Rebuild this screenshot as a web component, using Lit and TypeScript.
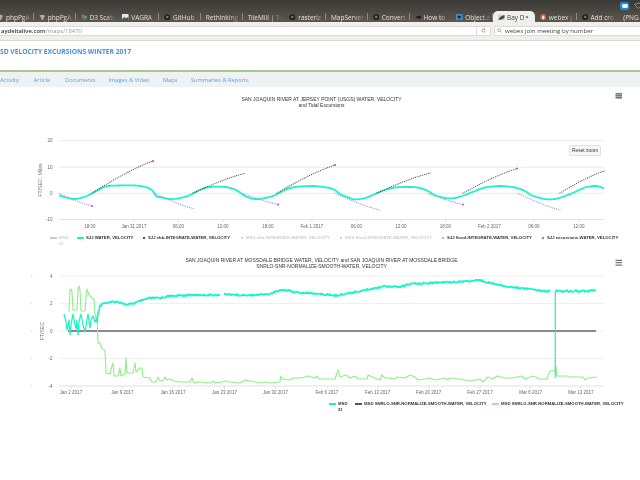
import { LitElement, html, svg, css } from "lit";
import { customElement } from "lit/decorators.js";

type P = [number, number];
const pts = (a: P[]) => a.map((p) => p.join(",")).join(" ");
const rnd = (i: number) => {
  const x = Math.sin(i * 12.9898) * 43758.5453;
  return x - Math.floor(x);
};

function smooth(a: P[], step = 1.5): P[] {
  const out: P[] = [];
  for (let i = 0; i < a.length - 1; i++) {
    const p0 = a[Math.max(i - 1, 0)], p1 = a[i], p2 = a[i + 1], p3 = a[Math.min(i + 2, a.length - 1)];
    const n = Math.max(1, Math.ceil((p2[0] - p1[0]) / step));
    for (let k = 0; k < n; k++) {
      const t = k / n, t2 = t * t, t3 = t2 * t;
      const f = (q: number) => 0.5 * (2 * p1[q] + (p2[q] - p0[q]) * t + (2 * p0[q] - 5 * p1[q] + 4 * p2[q] - p3[q]) * t2 + (3 * p1[q] - p0[q] - 3 * p2[q] + p3[q]) * t3);
      out.push([+f(0).toFixed(2), +f(1).toFixed(2)]);
    }
  }
  out.push(a[a.length - 1]);
  return out;
}

function densifyNoisy(a: P[], amp: number, seed: number): P[] {
  const out: P[] = [];
  let c = seed;
  for (let i = 0; i < a.length - 1; i++) {
    const n = Math.max(1, Math.round((a[i + 1][0] - a[i][0]) / 0.8));
    for (let k = 0; k < n; k++) {
      const t = k / n;
      out.push([+(a[i][0] + (a[i + 1][0] - a[i][0]) * t).toFixed(2), +(a[i][1] + (a[i + 1][1] - a[i][1]) * t + (rnd(c++) - 0.5) * amp).toFixed(2)]);
    }
  }
  out.push(a[a.length - 1]);
  return out;
}

function arc(x0: number, y0: number, x1: number, y1: number, w: number): P[] {
  const out: P[] = [];
  const n = Math.round((x1 - x0) / 1.8);
  for (let i = 0; i <= n; i++) {
    const t = i / n;
    const e = Math.sin((t * Math.PI) / 2);
    const m = t * (1 - w) + e * w;
    out.push([x0 + (x1 - x0) * t, y0 + (y1 - y0) * m]);
  }
  return out;
}

const tide: P[] = [[59, 195.5], [66, 197.5], [75, 199], [84, 197], [92, 193.5], [100, 189], [108, 186], [120, 185.5], [135, 185.5], [145, 187], [152, 190], [156, 196], [160, 197], [170, 199], [180, 198], [190, 195], [200, 190], [210, 187], [225, 187], [236, 190], [245, 196], [255, 199], [265, 198], [275, 195], [285, 190], [295, 187], [310, 186], [320, 186.5], [333, 189], [340, 194], [350, 198], [355, 199.5], [365, 198], [375, 194], [385, 190], [395, 187.5], [410, 187], [420, 188], [428, 191], [435, 195], [445, 198], [455, 198], [465, 195], [475, 191], [485, 187.5], [500, 186], [515, 187.5], [525, 191], [532, 195.5], [545, 199], [555, 199], [565, 196], [575, 192], [585, 187.5], [596, 186], [604, 188.5]];
const ebb = [[92, 193, 153, 161], [193, 193, 244, 173.5], [277, 193, 335, 165], [377, 193, 430, 173], [463, 193, 517, 168.5], [560, 193, 604, 171]];
const flood = [[59, 193.5, 92, 206], [155, 193.5, 193, 208.5], [243, 193.5, 278, 204.5], [335, 193.5, 380, 210], [428, 193.5, 463, 204.5], [518, 193.5, 560, 210]];
const reds: P[] = [[92, 206], [153, 161], [278, 204.5], [335, 165], [463, 204.5], [517, 168.5]];

const tealA: P[] = [[64, 314], [66, 322], [67, 330], [68, 325], [69, 320], [70, 335], [71, 325], [73, 314], [75, 325], [76, 329], [77, 320], [78, 335], [79, 322], [81, 314], [83, 325], [85, 332], [87, 320], [88, 314], [90, 328], [91, 320], [93, 316], [95, 322], [96, 320], [97, 322], [98, 313], [100, 306], [103, 303], [107, 303], [112, 302], [120, 302], [127, 305], [130, 304], [135, 303], [140, 301], [150, 298], [160, 298], [170, 296], [190, 295], [200, 295], [220, 295]];
const tealB: P[] = [[224, 294], [240, 295], [250, 295], [270, 294], [280, 290], [285, 290], [300, 293], [310, 293], [320, 294], [335, 295.5], [345, 294], [360, 291], [375, 288], [385, 286], [400, 287], [410, 284], [430, 283], [450, 282], [470, 281], [482, 280.5], [490, 283], [510, 287], [530, 289], [545, 291], [550, 291]];
const tealC: P[] = [[555.3, 378], [555.3, 291], [570, 291], [585, 291], [596, 290]];
const green: P[] = [[68, 311], [69, 311], [70, 290], [71, 289], [72, 292], [73, 310], [75, 310], [77, 310], [78, 290], [79, 286], [80, 290], [81, 311], [85, 311], [86, 298], [87, 289], [89, 295], [92, 298], [94, 299], [95, 313], [96, 320], [97, 316], [98, 343], [100, 343], [102, 349], [105, 350], [106, 373], [110, 374], [112, 366], [113, 363], [114, 376], [118, 376], [120, 368], [121, 376], [125, 374], [126, 358], [127, 373], [133, 373], [135, 363], [136, 372], [140, 368], [142, 368], [143, 377], [150, 378], [152, 382], [156, 382], [158, 377], [160, 381], [164, 380], [165, 377], [167, 380], [170, 379], [174, 381], [180, 382], [190, 382], [192, 378], [194, 383], [198, 382], [200, 382], [210, 383], [214, 381], [215, 383], [222, 382], [225, 381], [230, 382], [240, 383], [245, 380], [250, 381], [255, 382], [260, 383], [265, 382], [270, 383], [280, 382], [280.5, 376], [282, 379], [290, 380], [293, 378], [300, 378], [305, 377], [308, 376], [315, 378], [317, 376], [319, 379], [325, 379], [335, 379], [338, 370], [340, 377], [346, 375], [350, 378], [355, 376], [358, 379], [367, 379], [368, 375], [375, 378], [380, 380], [381.7, 375], [385, 378], [390, 378], [395, 379], [397, 377], [405, 378], [410, 375], [415, 377], [418, 380], [425, 379], [430, 378], [435, 380], [445, 378], [448, 380], [450, 378], [460, 379], [470, 381], [475, 380], [480, 379], [483, 382], [488, 377], [493, 379], [497, 376], [505, 378], [513, 378], [521.7, 376], [525, 379], [533, 376], [540, 379], [546.7, 379], [550, 371], [555, 371], [556, 366], [556.7, 376], [566.7, 376], [570, 377], [583, 377], [585, 380], [588, 378], [596.7, 377]];

const ticks1: [number, string][] = [[90, "18:00"], [134, "Jan 31 2017"], [178.5, "06:00"], [223, "12:00"], [268, "18:00"], [312, "Feb 1 2017"], [356.5, "06:00"], [401, "12:00"], [445.5, "18:00"], [489.5, "Feb 2 2017"], [534, "06:00"], [579, "12:00"]];
const ticks2: [number, string][] = [[71, "Jan 2 2017"], [122.3, "Jan 9 2017"], [173, "Jan 16 2017"], [224.5, "Jan 23 2017"], [275.5, "Jan 30 2017"], [327, "Feb 6 2017"], [377.7, "Feb 13 2017"], [428.7, "Feb 20 2017"], [480, "Feb 27 2017"], [530.6, "Mar 6 2017"], [581, "Mar 13 2017"]];

const tabs = [
  ["php", "phpPgA"], ["php", "phpPgA"], ["d3", "D3 Scatt"], ["img", "VAGRA"], ["gh", "GitHub"], ["", "Rethinking"],
  ["", "TileMill | Til"], ["gh", "rasteriz"], ["", "MapServer"], ["gh", "Convert"], ["dark", "How to"], ["blue", "Object.a"],
  ["bay", "Bay D"], ["ddg", "webex j"], ["gh", "Add cro"], ["", "(PNG I"],
];

function tabIcon(k: string) {
  switch (k) {
    case "php": return html`<svg class="ico" viewBox="0 0 6 6"><path d="M.5 1.500Q3 0 5.500 1.500L4.500 3.500 3.800 5.500H2.500L2 3.500Z" fill="#b0aca4"/></svg>`;
    case "d3": return html`<svg class="ico" viewBox="0 0 6 6"><circle cx="2" cy="2" r="1.6" fill="#d9534f"/><circle cx="4.200" cy="2.800" r="1.500" fill="#5a9e5a"/><circle cx="2.600" cy="4.300" r="1.400" fill="#4a78c8"/></svg>`;
    case "img": return html`<svg class="ico" viewBox="0 0 6 6"><rect width="6" height="6" fill="#e8e8e4"/><path d="M0 5 2 2.500 3.500 4 5 3 6 4V6H0Z" fill="#3f5f57"/></svg>`;
    case "gh": return html`<svg class="ico" viewBox="0 0 6 6"><circle cx="3" cy="3" r="2.800" fill="#23211e"/><circle cx="3" cy="2.700" r="1.200" fill="#77736b"/></svg>`;
    case "dark": return html`<svg class="ico" viewBox="0 0 6 6"><path d="M0 3 3 1.600H6V4.200H3Z" fill="#1c1a18"/></svg>`;
    case "blue": return html`<svg class="ico" viewBox="0 0 6 6"><rect width="6" height="6" fill="#3a92c8"/><path d="M1.500 1.500H4.500V3.500H3.300V5H2.600V3.500H1.500Z" fill="#123"/></svg>`;
    case "bay": return html`<svg class="ico" viewBox="0 0 6 6"><rect y=".6" width="6" height="4.800" fill="#c8d4cc"/><path d="M0 5 3 2 6 1V3.500L3 5.400Z" fill="#4a4a3a"/></svg>`;
    case "ddg": return html`<svg class="ico" viewBox="0 0 6 6"><circle cx="3" cy="3" r="2.900" fill="#d85a33"/><ellipse cx="3" cy="3.200" rx="1.100" ry="1.800" fill="#f4ece2"/></svg>`;
    default: return "";
  }
}

function gridlines(ys: number[]) {
  return ys.map((y) => svg`<line class="grid" x1="59" x2="604" y1=${y} y2=${y}></line>`);
}
function xaxis(y: number, ticks: [number, string][], labelY: number) {
  return svg`<line class="axis" x1="59" x2="604" y1=${y} y2=${y}></line>
    ${ticks.map(([x, t]) => svg`<line class="axis" x1=${x} x2=${x} y1=${y} y2=${y + 3}></line><text class="tick" x=${x} y=${labelY} text-anchor="middle">${t}</text>`)}`;
}
function burger(y: number, gap: number) {
  return svg`<g class="burger">${[0, gap, gap * 2].map((d) => svg`<line x1="615.5" x2="622" y1=${y + d} y2=${y + d}></line>`)}</g>`;
}

@customElement("app-chart-one")
class ChartOne extends LitElement {
  static styles = css`
    :host { display: block; }
    svg { display: block; width: 640px; height: 145px; font-family: 'Liberation Sans', Arial, sans-serif; }
    .grid { stroke: #e4e4e4; stroke-width: .8; }
    .axis { stroke: #cfd6e4; stroke-width: .7; }
    .tick { font-size: 4.5px; fill: #666; }
    .title { font-size: 5px; fill: #333; }
    .ylab { font-size: 5.2px; fill: #777; }
    .tide { fill: none; stroke: #1bf5c6; stroke-width: 1.8; stroke-linejoin: round; }
    .ebb { fill: #333; }
    .flood { fill: #9a94f0; }
    .red { fill: #ef3f6d; }
    .burger line { stroke: #777; stroke-width: 1.6; }
    .btn { fill: #f7f7f7; stroke: #ccc; stroke-width: .6; }
    .btntext { font-size: 4.9px; fill: #333; }
  `;
  render() {
    return html`<svg viewBox="0 87 640 145">
      <text class="title" x="321.5" y="101.2" text-anchor="middle">SAN JOAQUIN RIVER AT JERSEY POINT (USGS) WATER, VELOCITY</text>
      <text class="title" x="321.5" y="107.3" text-anchor="middle">and Tidal Excursions</text>
      ${burger(93.8, 2)}
      ${gridlines([140.7, 167.2, 193.3])}
      ${xaxis(219.5, ticks1, 227.6)}
      ${[[20, 140.7], [10, 167.2], [0, 193.3], [-10, 219.5]].map(([v, y]) => svg`<text class="tick" x="52.5" y=${y + 1.7} text-anchor="end">${v}</text>`)}
      <text class="ylab" transform="translate(42,180) rotate(-90)" text-anchor="middle">FT/SEC, Miles</text>
      <polyline class="tide" points=${pts(smooth(tide))}></polyline>
      ${ebb.map((e) => arc(e[0], e[1], e[2], e[3], 0.3).map(([x, y]) => svg`<circle class="ebb" cx=${x} cy=${y} r=".55"></circle>`))}
      ${flood.map((e) => arc(e[0], e[1], e[2], e[3], 0.3).map(([x, y]) => svg`<circle class="flood" cx=${x} cy=${y} r=".6"></circle>`))}
      ${reds.map(([x, y]) => svg`<circle class="red" cx=${x} cy=${y} r=".9"></circle>`)}
      <rect class="btn" x="569.5" y="145.5" width="31" height="10" rx="1"></rect>
      <text class="btntext" x="585" y="152.2" text-anchor="middle">Reset zoom</text>
    </svg>`;
  }
}

@customElement("app-chart-two")
class ChartTwo extends LitElement {
  static styles = css`
    :host { display: block; }
    svg { display: block; width: 640px; height: 148px; font-family: 'Liberation Sans', Arial, sans-serif; }
    .grid { stroke: #f0f0f0; stroke-width: 1; }
    .axis { stroke: #cfd6e4; stroke-width: .7; }
    .tick { font-size: 4.5px; fill: #666; }
    .title { font-size: 5px; fill: #333; }
    .ylab { font-size: 5.2px; fill: #777; }
    .mark { fill: #c9dcf0; }
    .zero { stroke: #666; stroke-width: 1.3; }
    .teal { fill: none; stroke: #12f5c6; stroke-width: 1.7; stroke-linejoin: round; }
    .teal0 { fill: none; stroke: #12f5c6; stroke-width: 1.2; stroke-linejoin: round; }
    .green { fill: none; stroke: #90ee88; stroke-width: 1.1; stroke-linejoin: round; }
    .burger line { stroke: #555; stroke-width: 1; }
  `;
  render() {
    const ys = [276, 303.5, 331, 358.5, 386];
    return html`<svg viewBox="0 250 640 148">
      <text class="title" x="321.5" y="261.5" text-anchor="middle">SAN JOAQUIN RIVER AT MOSSDALE BRIDGE WATER, VELOCITY and SAN JOAQUIN RIVER AT MOSSDALE BRIDGE</text>
      <text class="title" x="321.5" y="267.8" text-anchor="middle">SNRLO-SNR-NORMALIZE-SMOOTH-WATER, VELOCITY</text>
      ${burger(260.3, 2.4)}
      ${gridlines(ys.slice(0, 4))}
      ${xaxis(386, ticks2, 394)}
      ${ys.map((y, i) => svg`<text class="tick" x="52.5" y=${y + 1.7} text-anchor="end">${[4, 2, 0, -2, -4][i]}</text><rect class="mark" x="31.3" y=${y - 1} width=".9" height="2"></rect>`)}
      <text class="ylab" transform="translate(44,331) rotate(-90)" text-anchor="middle">FT/SEC</text>
      <line class="zero" x1="68" x2="596" y1="331" y2="331"></line>
      <polyline class="green" points=${pts(green)}></polyline>
      <polyline class="teal0" points=${pts(tealA.slice(0, 23))}></polyline>
      <polyline class="teal" points=${pts(densifyNoisy(tealA.slice(22), 1.7, 7))}></polyline>
      <polyline class="teal" points=${pts(densifyNoisy(tealB, 1.8, 300))}></polyline>
      <polyline class="teal0" points=${pts(tealC.slice(0, 2))}></polyline>
      <polyline class="teal" points=${pts(densifyNoisy(tealC.slice(1), 2.2, 900))}></polyline>
    </svg>`;
  }
}

@customElement("app-root")
export class AppRoot extends LitElement {
  static styles = css`
    :host { display: block; width: 640px; height: 480px; overflow: hidden; background: #fff; font-family: 'Liberation Sans', Arial, sans-serif; }
    .page { width: 640px; height: 480px; overflow: hidden; filter: blur(.4px); background: #fff; }
    .chrome { background: linear-gradient(#3b3935, #5b5750); height: 22px; }
    .tray { height: 11px; display: flex; justify-content: flex-end; align-items: center; gap: 4.5px; }
    .zoomapp { width: 9px; height: 8px; background: #1e88e5; border-radius: 2px; display: flex; align-items: center; justify-content: center; margin-top: 1px; }
    .zoomapp i { width: 6px; height: 3.4px; background: #fff; border-radius: 2px; display: block; }
    .wifi { width: 9px; height: 7px; margin-right: -2.5px; }
    .tabs { height: 11px; display: flex; margin-left: -8px; font: 6.5px/11px 'Open Sans', sans-serif; color: #e2ded6; }
    .tab { flex: 0 0 41.75px; width: 41.75px; height: 11px; padding: 1px 2px 0 5px; box-sizing: border-box; display: flex; align-items: center; gap: 2.5px; overflow: hidden; position: relative; white-space: nowrap; }
    .tab::after { content: ""; position: absolute; right: 0; top: 2px; bottom: 2px; width: .7px; background: #8d8980; }
    .tab.active { background: #f1efec; color: #444; border-radius: 5px 5px 0 0; }
    .tab.active::after { display: none; }
    .tab .lbl { overflow: hidden; flex: 1; -webkit-mask-image: linear-gradient(90deg, #000 65%, transparent); mask-image: linear-gradient(90deg, #000 65%, transparent); }
    .tab .x { position: absolute; right: 6px; font-size: 6px; font-weight: 700; color: #555; }
    .ico { width: 6.5px; height: 6.5px; flex: none; }
    .toolbar { height: 19px; box-sizing: border-box; background: #f1efec; border-bottom: 1px solid #d8d5d0; display: flex; align-items: center; gap: 3px; font: 5.9px 'Open Sans', sans-serif; padding-bottom: 1px; }
    .field { height: 10px; background: #fff; border: .6px solid #dedbd6; border-radius: 1px; display: flex; align-items: center; box-sizing: border-box; white-space: nowrap; }
    .addr { width: 492px; margin-left: -1px; padding-left: 1px; }
    .dom { color: #333; font-weight: 600; }
    .path { color: #999; flex: 1; }
    .reload { width: 14px; height: 100%; border-left: .6px solid #ddd; display: flex; align-items: center; justify-content: center; box-sizing: border-box; }
    .reload svg { width: 5px; height: 5px; }
    .search { flex: 1; margin-right: -3px; color: #444; gap: 3px; padding-left: 2px; font-size: 6.1px; }
    .search svg { width: 5px; height: 5px; }
    .head { height: 29px; box-sizing: border-box; padding-top: 5.5px; font: 700 6.7px/9px 'Open Sans', sans-serif; color: #4a8fdc; }
    .rule { height: 2px; background: #a9c98c; }
    .nav { height: 15px; background: #eef2f5; display: flex; align-items: center; font: 5.7px 'Open Sans', sans-serif; color: #5c9fd6; }
    .nav span:nth-child(1) { width: 33.5px; }
    .nav span:nth-child(2) { width: 31.5px; }
    .nav span:nth-child(3) { width: 43.5px; }
    .nav span:nth-child(4) { width: 54.5px; }
    .nav span:nth-child(5) { width: 28px; }
    .legend { display: grid; font-size: 4.25px; line-height: 5.6px; font-weight: 700; color: #333; align-items: start; }
    .l1 { height: 18px; padding: 3.4px 0 0 50px; grid-template-columns: 27px 65px 98px 99px 102px 100px 95px; box-sizing: border-box; }
    .l2 { height: 17px; padding: 3.4px 0 0 329px; grid-template-columns: 26px 137px 130px; box-sizing: border-box; }
    .item { display: flex; gap: 2px; white-space: nowrap; }
    .item.off { color: #ccc; }
    .item.wrap { white-space: normal; }
    .item.wrap b { width: 9px; }
    .item b { font-weight: 700; }
    .sym { flex: none; height: 5.6px; position: relative; }
    .line { width: 7px; }
    .dot { width: 4px; }
    .line::before { content: ""; position: absolute; left: 0; right: 0; top: 2.1px; height: 1.4px; background: var(--c); }
    .dot::before { content: ""; position: absolute; left: 1.4px; top: 2.1px; width: 1.3px; height: 1.3px; border-radius: 50%; background: var(--c); }
  `;
  item(text: string, kind: string, color: string, off = false, wrap = false) {
    return html`<div class="item ${off ? "off" : ""} ${wrap ? "wrap" : ""}"><span class="sym ${kind}" style="--c:${color}"></span><b>${text}</b></div>`;
  }
  render() {
    return html`<div class="page">
      <div class="chrome">
        <div class="tray">
          <div class="zoomapp"><i></i></div>
          <svg class="wifi" viewBox="0 0 9 7"><path d="M.5 2.500Q4.500-.5 8.500 2.500L4.500 6.500Z" fill="none" stroke="#a8a49c" stroke-width=".8"/></svg>
        </div>
        <div class="tabs">
          ${tabs.map(([ic, t]) => html`<div class="tab ${t === "Bay D" ? "active" : ""}">${tabIcon(ic)}<span class="lbl">${t}</span>${t === "Bay D" ? html`<span class="x">×</span>` : ""}</div>`)}
        </div>
      </div>
      <div class="toolbar">
        <div class="field addr"><span class="dom">aydeltalive.com</span><span class="path">/maps/18470</span>
          <span class="reload"><svg viewBox="0 0 6 6"><path d="M5 3A2 2 0 1 1 4.300 1.500M4.500.3V1.800H3" fill="none" stroke="#777" stroke-width=".7"/></svg></span></div>
        <div class="field search"><svg viewBox="0 0 6 6"><circle cx="2.500" cy="2.500" r="1.800" fill="none" stroke="#888" stroke-width=".7"/><path d="M3.800 3.800 5.500 5.500" stroke="#888" stroke-width=".8"/></svg>webex join meeting by number</div>
      </div>
      <div class="head">SD VELOCITY EXCURSIONS WINTER 2017</div>
      <div class="rule"></div>
      <div class="nav"><span>Activity</span><span>Article</span><span>Documents</span><span>Images &amp; Video</span><span>Maps</span><span>Summaries &amp; Reports</span></div>
      <app-chart-one></app-chart-one>
      <div class="legend l1">
        ${this.item("MSD 21", "line", "#ccc", true, true)}
        ${this.item("SJJ WATER, VELOCITY", "line", "#1bf5c6")}
        ${this.item("SJJ ebb-INTEGRATE-WATER, VELOCITY", "dot", "#333")}
        ${this.item("MSD ebb-INTEGRATE-WATER, VELOCITY", "dot", "#ccc", true)}
        ${this.item("MSD flood-INTEGRATE-WATER, VELOCITY", "dot", "#ccc", true)}
        ${this.item("SJJ flood-INTEGRATE-WATER, VELOCITY", "dot", "#a9a4f2")}
        ${this.item("SJJ excursions-WATER, VELOCITY", "dot", "#ef3f6d")}
      </div>
      <app-chart-two></app-chart-two>
      <div class="legend l2">
        ${this.item("MSD 21", "line", "#12f5c6", false, true)}
        ${this.item("MSD SNRLO-SNR-NORMALIZE-SMOOTH-WATER, VELOCITY", "line", "#555")}
        ${this.item("MSD SNRLO-SNR-NORMALIZE-SMOOTH-WATER, VELOCITY", "line", "#96f08c")}
      </div>
    </div>`;
  }
}
void ChartOne; void ChartTwo;
